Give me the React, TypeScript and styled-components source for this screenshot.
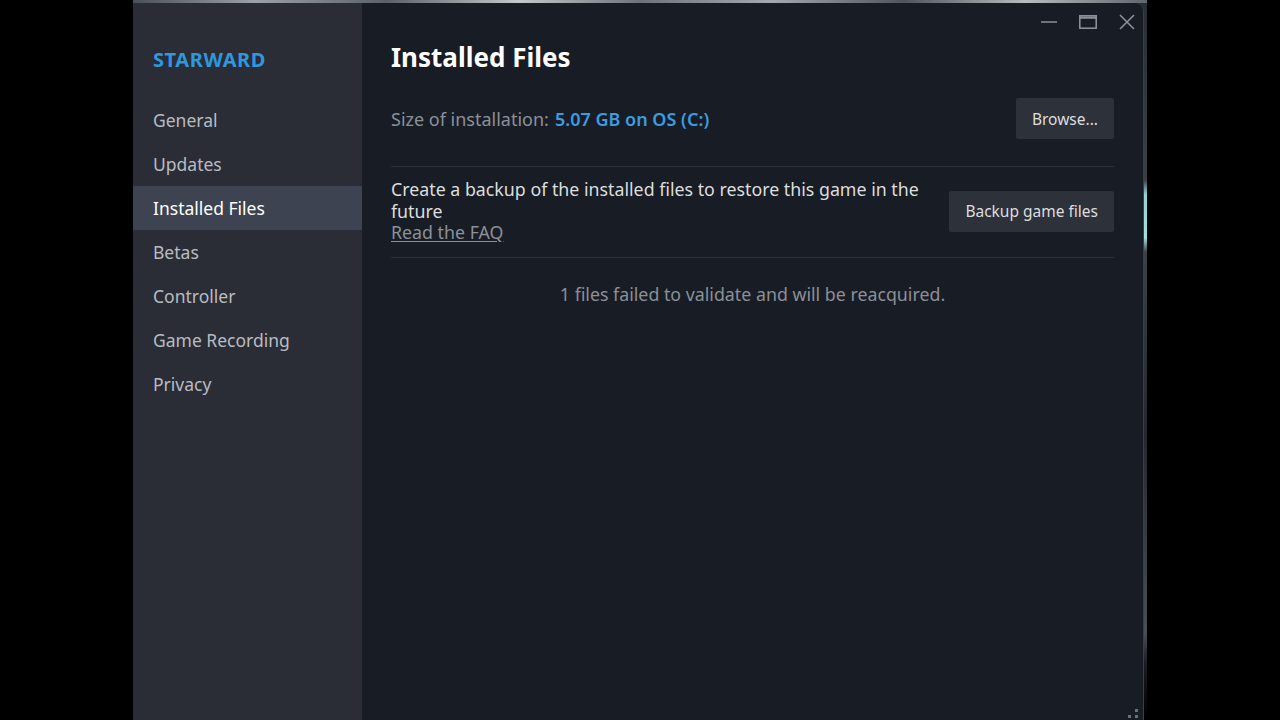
import styled, { createGlobalStyle } from 'styled-components'

const GlobalStyle = createGlobalStyle`
  html, body {
    margin: 0;
    padding: 0;
    background: #000;
    height: 720px;
    overflow: hidden;
  }
  body {
    font-family: "Noto Sans", "Open Sans", Arial, sans-serif;
  }
`

const Screen = styled.div`
  width: 1280px;
  height: 720px;
  background: #000;
  padding-left: 133px;
  box-sizing: border-box;
`

const Desktop = styled.div`
  width: 1014px;
  height: 720px;
  padding: 3px 3px 0 0;
  box-sizing: border-box;
  background:
    linear-gradient(90deg, #4a5058 0%, #9aa1a8 12%, #5b6168 25%, #c4c8cc 38%, #6d737a 50%, #a3a9ae 63%, #4f555c 76%, #b8bcc0 88%, #60666d 100%) top / 100% 3px no-repeat,
    linear-gradient(180deg, #2a2e33 0%, #3a4046 25%, #8fd3d8 27%, #9fe0e2 33%, #3c4148 35%, #24282d 60%, #4a4f55 88%, #1a1d21 92%, #000 100%);
`

const Window = styled.div`
  display: flex;
  height: 717px;
  border-top-right-radius: 8px;
  overflow: hidden;
  background: #181c24;
  box-shadow: inset -1px 0 0 #3a3f47;
`

const Sidebar = styled.nav`
  width: 229px;
  flex-shrink: 0;
  background: #2a2d36;
  padding-top: 45px;
  box-sizing: border-box;
`

const GameTitle = styled.div`
  padding-left: 20px;
  height: 24px;
  line-height: 24px;
  margin-bottom: 26px;
  color: #2f97de;
  font-size: 20px;
  font-weight: 700;
  letter-spacing: 0.6px;
`

const NavItem = styled.div<{ $active?: boolean }>`
  height: 44px;
  line-height: 44px;
  padding-left: 20px;
  font-size: 17.5px;
  color: ${(p) => (p.$active ? '#ffffff' : '#b8bcc2')};
  background: ${(p) => (p.$active ? '#3d4350' : 'transparent')};
`

const Main = styled.main`
  flex: 1;
  display: flex;
  flex-direction: column;
  position: relative;
`

const TitleBar = styled.div`
  height: 38px;
  display: flex;
  justify-content: flex-end;
  align-items: center;
  gap: 21px;
  padding-right: 8px;
`

const WinButton = styled.div`
  width: 18px;
  height: 18px;
  display: flex;
  align-items: center;
  justify-content: center;
`

const Content = styled.div`
  padding: 0 30px 0 29px;
`

const Title = styled.h1`
  margin: 0 0 25px;
  height: 32px;
  line-height: 32px;
  font-size: 26px;
  font-weight: 700;
  color: #ffffff;
`

const Row = styled.div<{ $pad: string }>`
  display: flex;
  align-items: center;
  justify-content: space-between;
  gap: 20px;
  padding: ${(p) => p.$pad};
  border-bottom: 1px solid #2b3038;
`

const Label = styled.span`
  font-size: 18px;
  color: #8b9098;
`

const Value = styled.span`
  font-size: 18px;
  font-weight: 600;
  color: #3d9be0;
  margin-left: 6px;
`

const Button = styled.button`
  height: 41px;
  padding: 0 16px;
  border: none;
  border-radius: 2px;
  background: #2d313a;
  color: #dcdedf;
  font-family: inherit;
  font-size: 15.5px;
  white-space: nowrap;
  flex-shrink: 0;
`

const BackupText = styled.div`
  flex: 1;
  font-size: 17.8px;
  line-height: 21.5px;
  color: #dcdedf;
`

const FaqLink = styled.a`
  display: block;
  color: #8b9098;
  text-decoration: underline;
  text-underline-offset: 2px;
`

const Notice = styled.div`
  margin-top: 25px;
  text-align: center;
  font-size: 17.8px;
  line-height: 22px;
  color: #8b9098;
`

const Grip = styled.svg`
  position: absolute;
  right: 4px;
  bottom: 1px;
`

const navItems = ['General', 'Updates', 'Installed Files', 'Betas', 'Controller', 'Game Recording', 'Privacy']

export default function App() {
  return (
    <>
      <GlobalStyle />
      <Screen>
        <Desktop>
          <Window>
            <Sidebar>
              <GameTitle>STARWARD</GameTitle>
              {navItems.map((item) => (
                <NavItem key={item} $active={item === 'Installed Files'}>
                  {item}
                </NavItem>
              ))}
            </Sidebar>
            <Main>
              <TitleBar>
                <WinButton>
                  <svg width="18" height="18" viewBox="0 0 18 18">
                    <line x1="1" y1="9" x2="17" y2="9" stroke="#8a8f98" strokeWidth="1.6" />
                  </svg>
                </WinButton>
                <WinButton>
                  <svg width="18" height="18" viewBox="0 0 18 18">
                    <rect x="0.8" y="2.8" width="16.4" height="12.4" fill="none" stroke="#8a8f98" strokeWidth="1.6" />
                    <line x1="0.8" y1="4.6" x2="17.2" y2="4.6" stroke="#8a8f98" strokeWidth="2.2" />
                  </svg>
                </WinButton>
                <WinButton>
                  <svg width="18" height="18" viewBox="0 0 18 18">
                    <path d="M2 2 L16 16 M16 2 L2 16" stroke="#8a8f98" strokeWidth="1.6" />
                  </svg>
                </WinButton>
              </TitleBar>
              <Content>
                <Title>Installed Files</Title>
                <Row $pad="0 0 27px">
                  <div>
                    <Label>Size of installation:</Label>
                    <Value>5.07 GB on OS (C:)</Value>
                  </div>
                  <Button>Browse...</Button>
                </Row>
                <Row $pad="12px 0 13px">
                  <BackupText>
                    Create a backup of the installed files to restore this game in the future
                    <FaqLink>Read the FAQ</FaqLink>
                  </BackupText>
                  <Button>Backup game files</Button>
                </Row>
                <Notice>1 files failed to validate and will be reacquired.</Notice>
              </Content>
              <Grip width="12" height="12" viewBox="0 0 12 12">
                <rect x="7" y="2" width="3" height="3" fill="#6b7078" />
                <rect x="0" y="8" width="3" height="3" fill="#6b7078" />
                <rect x="7" y="8" width="3" height="3" fill="#6b7078" />
              </Grip>
            </Main>
          </Window>
        </Desktop>
      </Screen>
    </>
  )
}
